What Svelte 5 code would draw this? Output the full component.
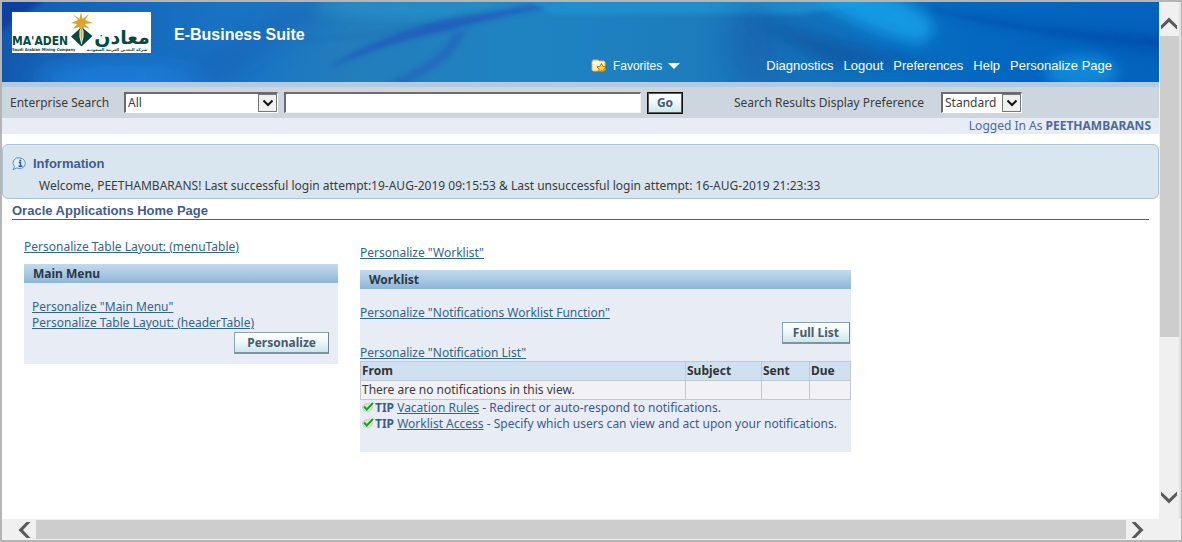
<script>
  const navLinks = ['Diagnostics', 'Logout', 'Preferences', 'Help', 'Personalize Page'];
  const columns = ['From', 'Subject', 'Sent', 'Due'];
  const tips = [
    { link: 'Vacation Rules', text: ' - Redirect or auto-respond to notifications.' },
    { link: 'Worklist Access', text: ' - Specify which users can view and act upon your notifications.' }
  ];
</script>

{#snippet chevron()}
  <span class="drop" aria-hidden="true">
    <svg width="12" height="8" viewBox="0 0 12 8"><path d="M1.5 1.5 6 6l4.5-4.5" fill="none" stroke="#111" stroke-width="2" /></svg>
  </span>
{/snippet}

<div class="frame">
  <main class="page">
    <header class="banner">
      <svg class="backdrop" viewBox="0 0 1157 80" preserveAspectRatio="none" aria-hidden="true">
        <defs>
          <linearGradient id="sky" x1="0" x2="1" y1="0" y2="0">
            <stop offset="0" stop-color="#1259ae" />
            <stop offset=".06" stop-color="#1563b9" />
            <stop offset=".22" stop-color="#1a76c4" />
            <stop offset=".3" stop-color="#237dbb" />
            <stop offset=".45" stop-color="#1f83c2" />
            <stop offset=".6" stop-color="#1d7dbd" />
            <stop offset=".66" stop-color="#1970b6" />
            <stop offset=".76" stop-color="#0c70c2" />
            <stop offset=".84" stop-color="#0468c0" />
            <stop offset="1" stop-color="#0362bc" />
          </linearGradient>
          <filter id="soft" x="-50%" y="-100%" width="200%" height="300%"><feGaussianBlur stdDeviation="12" /></filter>
          <filter id="haze" x="-40%" y="-60%" width="180%" height="220%"><feGaussianBlur stdDeviation="7" /></filter>
          <filter id="fine" x="-20%" y="-40%" width="140%" height="180%"><feGaussianBlur stdDeviation="2.5" /></filter>
        </defs>
        <rect width="1157" height="80" fill="url(#sky)" />
        <path d="M-10-10H52L-10 36Z" fill="#0a3fa0" filter="url(#fine)" />
        <ellipse cx="120" cy="78" rx="90" ry="14" fill="#1c82dc" filter="url(#soft)" />
        <path d="M160 80 290 0h50L220 80Z" fill="#1459b0" opacity=".4" filter="url(#soft)" />
        <path d="M310 6Q400 22 540 0H330Z" fill="#2d9bcf" opacity=".7" filter="url(#haze)" />
        <path d="M300 38Q400 34 470 14" stroke="#1765a6" stroke-width="2" fill="none" opacity=".5" filter="url(#fine)" />
        <path d="M330 64Q390 28 460 16T560-1L540 5Q480 18 445 28 390 38 330 64Z" fill="#2458bd" stroke="#2458bd" stroke-width="2" opacity=".8" filter="url(#fine)" />
        <path d="M380 84Q440 58 450 32L464 26Q460 56 400 84Z" fill="#2060bd" opacity=".6" filter="url(#fine)" />
        <path d="M520-6H900L800 12H550Z" fill="#2495d4" opacity=".7" filter="url(#fine)" />
        <ellipse cx="750" cy="40" rx="24" ry="40" fill="#175fae" opacity=".5" filter="url(#soft)" />
        <path d="M750 18 940 64H830Z" fill="#085098" opacity=".6" filter="url(#haze)" />
        <path d="M840-14Q905-14 934 26L920 42Q870 32 815 0Z" fill="#14a0e8" opacity=".85" filter="url(#haze)" />
        <path d="M930 6Q1040 34 1165 52V34Q1060 28 930 6Z" fill="#063f9f" opacity=".45" filter="url(#haze)" />
        <path d="M930 7Q1040 34 1160 40" stroke="#063a9c" stroke-width="2" fill="none" opacity=".55" filter="url(#fine)" />
        <ellipse cx="1080" cy="70" rx="36" ry="16" fill="#1798e4" opacity=".7" filter="url(#haze)" />
      </svg>

      <svg class="logo" width="139" height="41" viewBox="0 0 139 41" role="img" aria-label="Ma'aden">
        <rect width="139" height="41" fill="#fff" />
        <path d="M69 0 70.500 7 77 2 73 8 81 11 73 12 78 17 72 15 70 21 67 15 61 17 65 12 59 11 66 8 61 2 67.500 7Z" fill="#d9a52a" />
        <path d="M69.500 15 59 24.500 69.500 34.500 80.500 24Z" fill="#07493f" />
        <path d="M69.500 14 67.500 19v6l2 8 2-8v-6Z" fill="#fff" />
        <path d="M69.500 14 68.500 18v7l1 6 1-6v-7Z" fill="#d9a52a" />
        <text x="0" y="33" class="latin">MA'ADEN</text>
        <text x="110" y="32" class="arabic">معادن</text>
        <text x="0" y="39" class="small">Saudi Arabian Mining Company</text>
        <text x="105" y="39" class="small-ar">شركة التعدين العربية السعودية</text>
      </svg>
      <strong class="suite">E-Business Suite</strong>

      <nav class="nav">
        <button type="button" class="favorites">
          <svg width="16" height="14" viewBox="0 0 16 14" aria-hidden="true">
            <path d="M1 3 2 1h5l1 1h5l1 1v8l-1 1H2l-1-1Z" fill="#fff1c4" stroke="#e5b052" />
            <path d="M1.500 4h5l2-1.500" fill="none" stroke="#fff" />
            <path d="m10.500 4.500 1.400 2.900 3.200.4-2.300 2.200.6 3.200-2.900-1.500-2.900 1.500.6-3.200-2.300-2.200 3.200-.4Z" fill="#ffd72a" stroke="#8b6510" stroke-width=".8" />
          </svg>
          Favorites
          <svg class="caret" width="12" height="6" viewBox="0 0 12 6" aria-hidden="true"><path d="M0 0h12L6 6Z" fill="#fff" /></svg>
        </button>
        {#each navLinks as label}
          <a href="#top">{label}</a>
        {/each}
      </nav>
    </header>

    <form class="search" onsubmit={(e) => e.preventDefault()}>
      <label for="scope" class="scope-label">Enterprise Search</label>
      <span class="select scope">
        <select id="scope"><option>All</option></select>
        {@render chevron()}
      </span>
      <input type="text" aria-label="Search text" />
      <button type="submit" class="go">Go</button>
      <label for="display" class="display-label">Search Results Display Preference</label>
      <span class="select display">
        <select id="display"><option>Standard</option></select>
        {@render chevron()}
      </span>
    </form>

    <div class="user">Logged In As <b>PEETHAMBARANS</b></div>

    <section class="info">
      <h2>
        <svg width="15" height="14" viewBox="0 0 15 14" aria-hidden="true">
          <path d="M8 1a5.700 5.300 0 1 1-3.200 9.900L1 12.800l1.600-3A5.300 5.300 0 0 1 8 1Z" fill="#e2edfb" stroke="#5b8bd0" />
          <path d="M6.800 5.500H8.500V9M6.500 9.300h4" fill="none" stroke="#2458a8" stroke-width="1.400" />
          <circle cx="8.300" cy="3.400" r="1" fill="#2458a8" />
        </svg>
        Information
      </h2>
      <p>Welcome, PEETHAMBARANS! Last successful login attempt:19-AUG-2019 09:15:53 &amp; Last unsuccessful login attempt: 16-AUG-2019 21:23:33</p>
    </section>

    <h1>Oracle Applications Home Page</h1>

    <div class="content">
      <section>
        <a href="#top">Personalize Table Layout: (menuTable)</a>
        <div class="panel menu">
          <h3>Main Menu</h3>
          <a href="#top">Personalize "Main Menu"</a>
          <a href="#top">Personalize Table Layout: (headerTable)</a>
          <button type="button">Personalize</button>
        </div>
      </section>

      <section class="worklist">
        <a href="#top">Personalize "Worklist"</a>
        <div class="panel">
          <h3>Worklist</h3>
          <a href="#top">Personalize "Notifications Worklist Function"</a>
          <button type="button">Full List</button>
          <a href="#top">Personalize "Notification List"</a>
          <table>
            <thead>
              <tr>{#each columns as column}<th scope="col" class={column.toLowerCase()}>{column}</th>{/each}</tr>
            </thead>
            <tbody>
              <tr><td>There are no notifications in this view.</td><td></td><td></td><td></td></tr>
            </tbody>
          </table>
          {#each tips as tip}
            <p class="tip">
              <svg width="12" height="10" viewBox="0 0 12 10" aria-hidden="true">
                <ellipse cx="5.500" cy="5.500" rx="5" ry="4" fill="#d5e8d2" stroke="#a5c5a2" stroke-width=".6" />
                <path d="m2 4.500 2.800 3L11 1" fill="none" stroke="#239b2d" stroke-width="2" />
              </svg><b>TIP</b> <a href="#top">{tip.link}</a>{tip.text}
            </p>
          {/each}
        </div>
      </section>
    </div>
  </main>

  <div class="bar vertical" aria-hidden="true">
    <svg width="18" height="14" viewBox="0 0 18 14"><path d="M1 9.500 9 1.500l8 8v4l-8-7.500-8 7.500Z" fill="#5a5a5a" /></svg>
    <span class="thumb"></span>
    <svg class="end" width="18" height="14" viewBox="0 0 18 14"><path d="m1 .5 8 7.500 8-7.500v4l-8 8-8-8Z" fill="#5a5a5a" /></svg>
  </div>
  <div class="bar horizontal" aria-hidden="true">
    <svg width="14" height="18" viewBox="0 0 14 18"><path d="M9.500 1 1.500 9l8 8h4L6 9l7.500-8Z" fill="#5a5a5a" /></svg>
    <span class="thumb"></span>
    <svg width="14" height="18" viewBox="0 0 14 18"><path d="m.5 1 7.500 8-7.500 8h4l8-8-8-8Z" fill="#5a5a5a" /></svg>
  </div>
</div>

<style>
  :global(body) {
    margin: 0;
    background: #fff;
  }

  .frame {
    box-sizing: border-box;
    min-height: 100vh;
    display: grid;
    grid-template: 1fr 21px / minmax(0, 1fr) 22px;
    border: 2px solid #b5b5b5;
    border-width: 2px 1px 2px 2px;
    font: 12px/16px "Noto Sans", Tahoma, sans-serif;
    color: #3c3c3c;
  }

  h1, h2, h3, p {
    margin: 0;
  }

  a {
    color: #33658a;
  }

  .banner {
    position: relative;
    z-index: 0;
    display: flex;
    height: 80px;
    overflow: hidden;
    color: #fff;
    font-family: "Liberation Sans", Arial, sans-serif;
  }

  .backdrop {
    position: absolute;
    inset: 0;
    width: 100%;
    height: 100%;
    z-index: -1;
  }

  .logo {
    flex: none;
    margin: 10px 23px 0 10px;
  }

  .logo text {
    fill: #07493f;
  }

  .latin {
    font: bold 12px "DejaVu Sans Condensed", sans-serif;
  }

  .arabic {
    font: bold 19px "DejaVu Sans", sans-serif;
    text-anchor: middle;
  }

  .small {
    font: bold 4px "DejaVu Sans Condensed", sans-serif;
  }

  .small-ar {
    font: bold 4px "DejaVu Sans", sans-serif;
    text-anchor: middle;
  }

  .suite {
    flex: 1;
    padding-top: 23px;
    font-size: 16px;
    line-height: 20px;
    white-space: nowrap;
  }

  .nav {
    display: flex;
    align-items: flex-end;
    gap: 10px;
    padding: 0 47px 8px 0;
    font-size: 13px;
    white-space: nowrap;
  }

  .nav a {
    color: #fff;
    text-decoration: none;
  }

  .nav .favorites {
    display: flex;
    align-items: center;
    gap: 6px;
    height: 16px;
    margin-right: 76px;
    padding: 0;
    border: 0;
    background: none;
    color: #fff;
    font: 12px/16px "Liberation Sans", Arial, sans-serif;
  }

  .search {
    display: flex;
    align-items: center;
    height: 31px;
    padding: 0 137px 0 8px;
    border-top: 5px solid #b3cae1;
    background: #cdd6de;
    white-space: nowrap;
  }

  .select {
    box-sizing: border-box;
    flex: none;
    display: grid;
    margin: 0 6px 0 12px;
    border: 1px solid #fff;
    border-top: 2px solid #6b6b6b;
    border-left: 2px solid #6b6b6b;
    background: #fff;
  }

  .select.display {
    margin-right: 0;
  }

  .select select {
    grid-area: 1 / 1;
    height: 18px;
    padding: 0 20px 0 2px;
    border: 0;
    border-radius: 0;
    appearance: none;
    background: none;
    color: inherit;
    font: inherit;
  }

  .scope-label {
    flex: none;
    width: 102px;
  }

  .scope {
    width: 154px;
  }

  .display {
    width: 81px;
  }

  .drop {
    grid-area: 1 / 1;
    justify-self: end;
    display: grid;
    place-items: center;
    width: 17px;
    height: 16px;
    border: 1px solid #777;
    background: #f0f0f0;
    pointer-events: none;
  }

  input {
    box-sizing: border-box;
    flex: 1;
    min-width: 0;
    height: 21px;
    border: 1px solid #f2f2f2;
    border-top: 2px solid #6b6b6b;
    border-left: 2px solid #6b6b6b;
    background: #fff;
    font: inherit;
  }

  button {
    box-sizing: border-box;
    height: 22px;
    padding: 0 10px;
    border: 1px solid #8ba3b0;
    border-right-color: #6d8391;
    border-bottom: 2px solid #7e949f;
    background: linear-gradient(#fff, #eff8fa 45%, #cbe6ec);
    color: #4b5a6d;
    font: bold 12px/16px "Noto Sans", Tahoma, sans-serif;
  }

  .go {
    flex: none;
    width: 36px;
    margin-left: 6px;
    padding: 0;
    border: 1px solid #111;
    outline: 1px solid #5a5a5a;
    outline-offset: -2px;
  }

  .display-label {
    flex: none;
    width: 195px;
    margin-left: 51px;
  }

  .user {
    height: 16px;
    padding-right: 8px;
    background: #e8edf5;
    color: #4c6a9c;
    text-align: right;
  }

  .info {
    box-sizing: border-box;
    height: 55px;
    margin-top: 10px;
    padding: 11px 9px 0;
    border: 1px solid #adc3d8;
    border-radius: 6px;
    background: #d9e6ef;
  }

  .info h2 {
    display: flex;
    align-items: center;
    gap: 6px;
    color: #3f5c8f;
    font: bold 13px/16px "Liberation Sans", Arial, sans-serif;
  }

  .info p {
    margin: 6px 0 0 27px;
  }

  h1 {
    margin: 4px 10px 0;
    border-bottom: 1px solid #4c6080;
    color: #3f5c8f;
    font: bold 13px/16px "Liberation Sans", Arial, sans-serif;
  }

  .content {
    display: grid;
    grid-template-columns: 314fr 491fr 286fr;
    align-items: start;
    gap: 22px;
    padding: 19px 0 20px 22px;
    white-space: nowrap;
  }

  .worklist {
    padding-top: 6px;
  }

  .panel {
    display: flex;
    flex-direction: column;
    align-items: flex-start;
    margin-top: 9px;
    padding-bottom: 20px;
    background: #e8edf5;
  }

  .panel h3 {
    box-sizing: border-box;
    align-self: stretch;
    height: 19px;
    margin-bottom: 16px;
    padding: 2px 9px 0;
    background: linear-gradient(#c3d9ec, #a9c9e4 50%, #8db5d8);
    color: #2c3844;
    font-size: 12px;
    line-height: 16px;
  }

  .panel button {
    align-self: flex-end;
    margin: 1px 1px 1px 0;
  }

  .menu {
    padding-bottom: 9px;
  }

  .menu > a {
    margin-left: 8px;
  }

  .menu button {
    margin-right: 9px;
    padding: 0 12px;
  }

  table {
    width: 100%;
    border-collapse: collapse;
    table-layout: fixed;
  }

  th, td {
    height: 18px;
    padding: 0 1px;
    border: 1px solid #c3c7d0;
    text-align: left;
  }

  th {
    background: #cfe0f0;
    color: #333;
  }

  td {
    background: #f2f1f6;
  }

  .subject {
    width: 73px;
  }

  .sent {
    width: 45px;
  }

  .due {
    width: 38px;
  }

  .tip {
    padding-left: 2px;
    color: #3c5a90;
  }

  .tip svg {
    margin-right: 1px;
  }

  .bar {
    display: flex;
    align-items: center;
    background: #f0f0f0;
  }

  .bar svg {
    flex: none;
  }

  .thumb {
    background: #cdcdcd;
  }

  .vertical {
    flex-direction: column;
    padding: 14px 0 14px;
    border-right: 2px solid #e2e2e2;
  }

  .vertical .thumb {
    width: 19px;
    height: 61.5%;
    margin-top: 6px;
  }

  .vertical .end {
    margin-top: auto;
  }

  .horizontal {
    grid-column: 1 / -1;
    gap: 5px;
    padding: 0 36px 0 15px;
  }

  .horizontal .thumb {
    flex: 1;
    height: 19px;
  }
</style>
